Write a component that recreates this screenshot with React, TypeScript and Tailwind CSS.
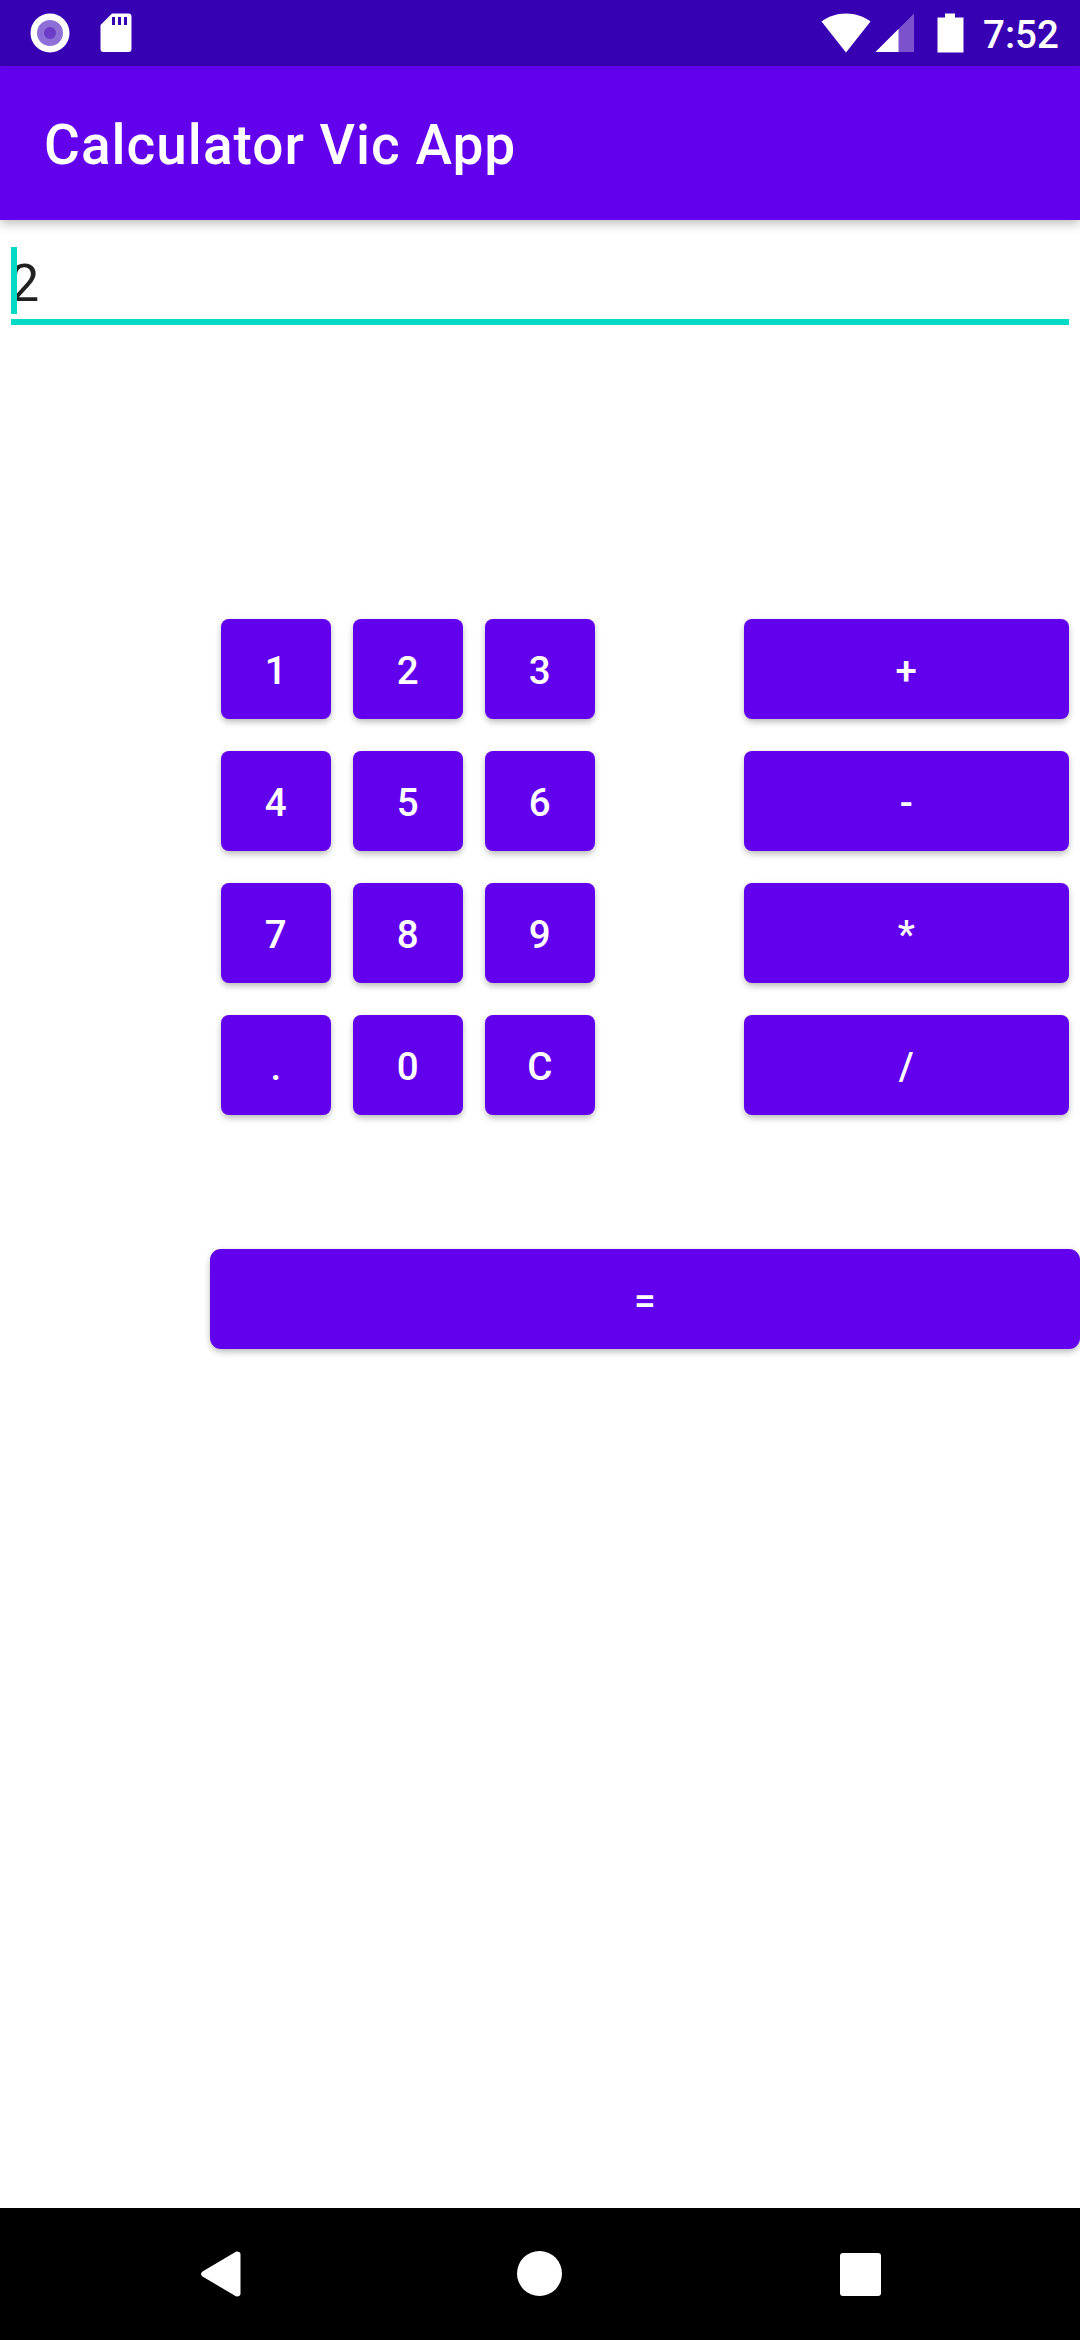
import React from "react";

const Btn = ({ label, className }: { label: string; className: string }) => (
  <button className={`flex h-[100px] items-center justify-center bg-[#6200EE] pl-[3px] pt-[4px] text-[38.5px] font-medium leading-none tracking-[0.0892857em] text-white shadow-[0_4px_7px_-1px_rgba(0,0,0,0.22),0_1px_6px_0_rgba(0,0,0,0.1)] ${className}`}>
    {label}
  </button>
);

const rows = [
  ["1", "2", "3", "+"],
  ["4", "5", "6", "-"],
  ["7", "8", "9", "*"],
  [".", "0", "C", "/"],
];

export default function App() {
  return (
    <div className="flex h-[2340px] w-[1080px] flex-col overflow-hidden bg-white font-['Roboto',sans-serif]">
      <div className="flex h-[66px] shrink-0 items-center bg-[#3700B3] text-white">
        <svg width="40" height="40" viewBox="0 0 40 40" className="ml-[30px]">
          <circle cx="20" cy="20" r="19.5" fill="#fff" />
          <circle cx="20" cy="20" r="13" fill="#8E6FD8" />
          <circle cx="20" cy="20" r="6" fill="#6A3CC8" />
        </svg>
        <svg width="32" height="40" viewBox="0 0 32 40" className="ml-[30px]">
          <path fillRule="evenodd" d="M12 0.5H28.5A3 3 0 0 1 31.5 3.5V36A3 3 0 0 1 28.5 39H3.5A3 3 0 0 1 0.5 36V12Z M12 4V12H15V4Z M18 4V12H21V4Z M24 4V12H27V4Z" fill="#fff" />
        </svg>
        <svg width="50" height="40" viewBox="0 0 50 40" className="ml-[689px]">
          <path d="M0.5 8.5C7 3.5 15.5 0.5 25 0.5C34.5 0.5 43 3.5 49.5 8.5L25 39.5Z" fill="#fff" />
        </svg>
        <svg width="40" height="40" viewBox="0 0 40 40" className="ml-[4px]">
          <path d="M39 0.5V39H0.5Z" fill="#7B52CC" />
          <path d="M23.5 16V39H0.5Z" fill="#fff" />
        </svg>
        <svg width="27" height="40" viewBox="0 0 27 40" className="ml-[22px]">
          <path d="M8 0.5H18V4.5H26.5V39.5H0.5V4.5H8Z" fill="#fff" />
        </svg>
        <span className="ml-[19px] pt-[4px] text-[38.5px] font-medium leading-none">7:52</span>
      </div>

      <header className="relative z-10 flex h-[154px] shrink-0 items-center bg-[#6200EE] pl-[44px] pt-[4px] shadow-[0_4px_10px_0_rgba(0,0,0,0.25)]">
        <h1 className="text-[55px] font-medium leading-none tracking-[1px] text-white">Calculator Vic App</h1>
      </header>

      <main className="flex-1 bg-white">
        <div className="relative mx-[11px] mt-[27px] h-[78px] border-b-[6px] border-[#03DAC5]">
          <span className="-ml-px block text-[52px] leading-[74px] text-[#212121]">2</span>
          <span className="absolute left-0 top-0 h-[67px] w-[6px] bg-[#03DAC5]" />
        </div>

        <div className="mt-[294px] flex flex-col gap-[32px] pl-[221px] pr-[11px]">
          {rows.map((row) => (
            <div key={row[0]} className="flex">
              <Btn label={row[0]} className="w-[110px] rounded-[8px]" />
              <Btn label={row[1]} className="ml-[22px] w-[110px] rounded-[8px]" />
              <Btn label={row[2]} className="ml-[22px] w-[110px] rounded-[8px]" />
              <Btn label={row[3]} className="ml-[149px] w-[325px] rounded-[8px]" />
            </div>
          ))}
        </div>

        <div className="mt-[134px] pl-[210px]">
          <Btn label="=" className="w-[870px] rounded-[11px]" />
        </div>
      </main>

      <nav className="flex h-[132px] shrink-0 items-start bg-black pt-[43px]">
        <svg width="40" height="46" viewBox="0 0 40 46" className="ml-[201px]">
          <path d="M36 0.5C38 0.5 39.5 1.5 39.5 3V43C39.5 44.5 38 45.5 36 45.5C35.3 45.5 34.6 45.2 34 44.7L1.5 25.5C-0.5 24 -0.5 22 1.5 20.5L34 1.3C34.6 0.8 35.3 0.5 36 0.5Z" fill="#fff" />
        </svg>
        <span className="ml-[276px] h-[45px] w-[45px] rounded-full bg-white" />
        <span className="ml-[278px] mt-[2px] h-[43px] w-[41px] rounded-[3px] bg-white" />
      </nav>
    </div>
  );
}
